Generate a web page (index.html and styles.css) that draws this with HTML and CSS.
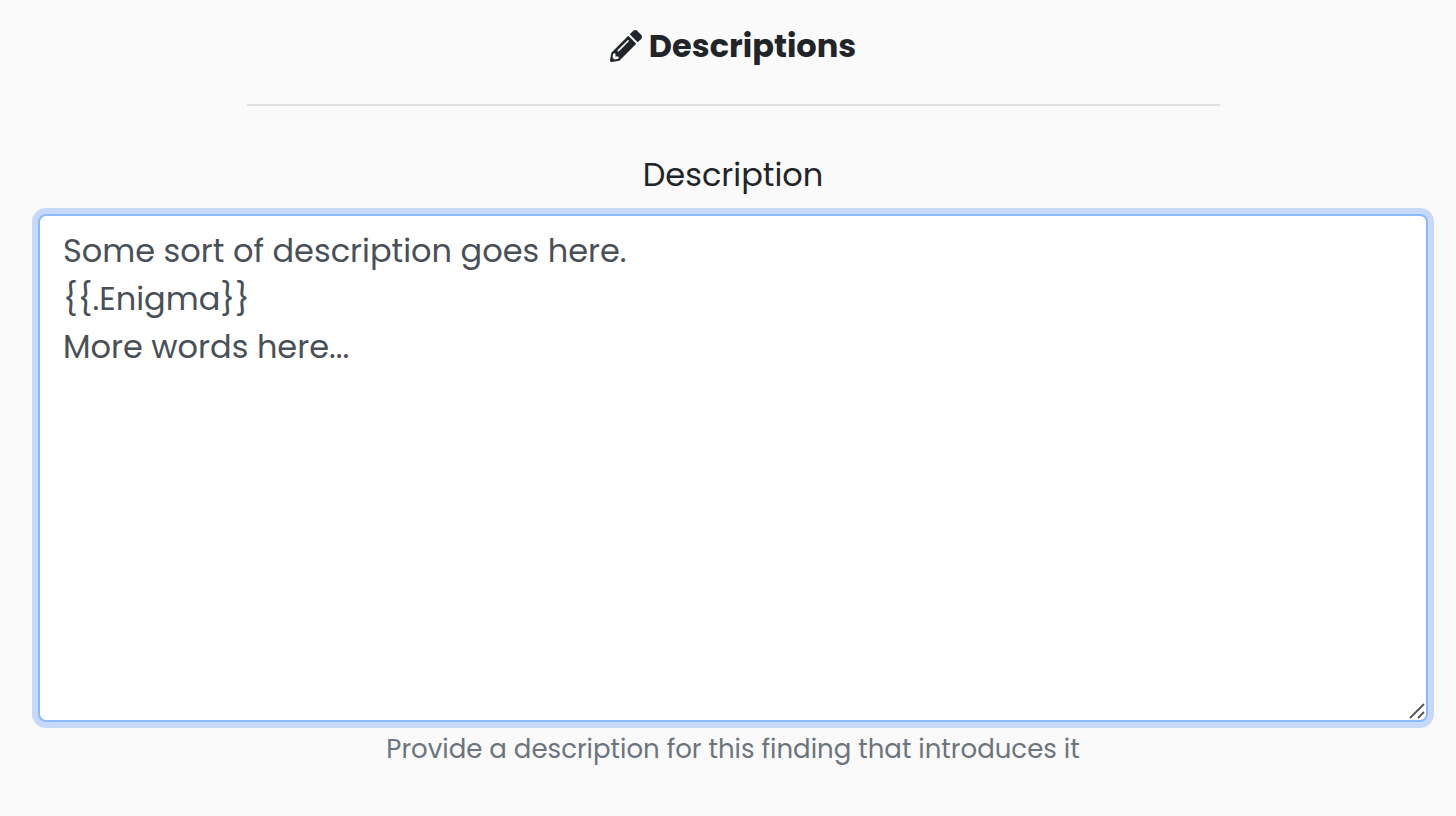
FILE: index.html
```html
<!DOCTYPE html>
<html lang="en">
<head>
<meta charset="utf-8">
<title>Descriptions</title>
<link rel="stylesheet" href="styles.css">
</head>
<body>
<main class="page">
  <h1 class="heading">
    <svg class="heading-icon" viewBox="0 0 512 512" aria-hidden="true"><path fill="currentColor" d="M497.9 142.1l-46.1 46.1c-4.7 4.7-12.3 4.7-17 0l-111-111c-4.7-4.7-4.7-12.3 0-17l46.1-46.1c18.7-18.7 49.1-18.7 67.9 0l60.1 60.1c18.8 18.7 18.8 49.1 0 67.9zM284.2 99.8L21.6 362.4.4 483.9c-2.9 16.4 11.4 30.6 27.8 27.8l121.5-21.3 262.6-262.6c4.7-4.7 4.7-12.3 0-17l-111-111c-4.8-4.7-12.4-4.7-17.1 0zM124.1 339.9c-5.5-5.5-5.5-14.3 0-19.8l154-154c5.5-5.5 14.3-5.5 19.8 0s5.5 14.3 0 19.8l-154 154c-5.5 5.5-14.3 5.5-19.8 0zM88 424h48v36.3l-64.5 11.3-31.1-31.1L51.7 376H88v48z"/></svg>
    <span>Descriptions</span>
  </h1>
  <hr class="divider">
  <form class="field">
    <label class="label" for="description">Description</label>
    <div class="control">
      <textarea class="textarea" id="description" aria-describedby="description-hint" spellcheck="false">Some sort of description goes here.
{{.Enigma}}
More words here...</textarea>
      <svg class="grip" viewBox="0 0 16 16" aria-hidden="true"><path d="M1 15L15 1M9 15L15 9" fill="none" stroke="#555" stroke-width="1.8"/></svg>
    </div>
    <small class="hint" id="description-hint">Provide a description for this finding that introduces it</small>
  </form>
</main>
</body>
</html>
```
FILE: styles.css
```css
* {
  box-sizing: border-box;
}

body {
  margin: 0;
  background: #fafafa;
  color: #212529;
  font-family: Poppins, Inter, sans-serif;
  font-size: 32px;
  line-height: 48px;
}

.page {
  padding: 22px 28px 32px 38px;
}

.heading {
  display: flex;
  align-items: center;
  justify-content: center;
  gap: 7px;
  margin: 0;
  font-size: 32px;
  font-weight: 700;
}

.heading-icon {
  width: 32px;
  height: 32px;
}

.divider {
  width: 70%;
  height: 2px;
  margin: 34px auto 45px;
  border: 0;
  background: #dfdfdf;
}

.field {
  display: flex;
  flex-direction: column;
  text-align: center;
}

.label {
  margin-bottom: 15px;
}

.control {
  position: relative;
  display: flex;
}

.textarea {
  width: 100%;
  height: 508px;
  padding: 11px 23px;
  border: 2px solid #8bbafa;
  border-radius: 8px;
  outline: 0;
  background: #fff;
  box-shadow: 0 0 0 6px #c6d9fa;
  color: #495057;
  font: inherit;
  resize: none;
}

.grip {
  position: absolute;
  right: 3px;
  bottom: 3px;
  width: 16px;
  height: 16px;
}

.hint {
  margin-top: 8px;
  color: #6c757d;
  font-size: 26px;
  line-height: 38px;
}
```
